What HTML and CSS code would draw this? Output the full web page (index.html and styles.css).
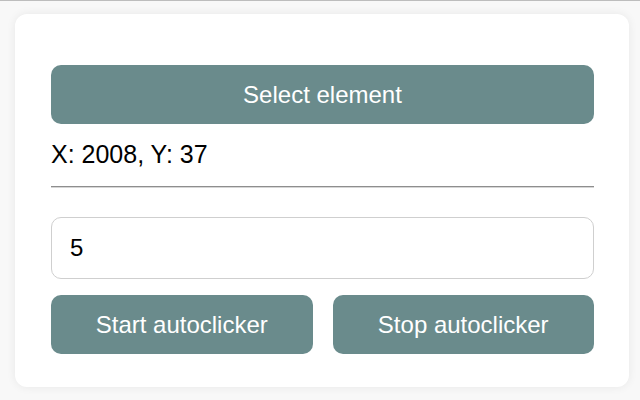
FILE: index.html
```html
<!DOCTYPE html>
<html>
<head>
<meta charset="utf-8">
<link rel="stylesheet" href="styles.css">
</head>
<body>
<div class="card">
  <button class="btn btn-select">Select element</button>
  <div class="coords">X: 2008, Y: 37</div>
  <hr class="divider">
  <input class="interval" type="text" value="5">
  <div class="actions">
    <button class="btn">Start autoclicker</button>
    <button class="btn">Stop autoclicker</button>
  </div>
</div>
</body>
</html>
```
FILE: styles.css
```css
html, body {
  margin: 0;
  height: 400px;
}
body {
  box-sizing: border-box;
  border-top: 1px solid #bdbdbd;
  background: #f8f8f8;
  padding: 13px 11px 13px 15px;
  font-family: "Liberation Sans", Arial, sans-serif;
  overflow: hidden;
}
.card {
  box-sizing: border-box;
  height: 373px;
  background: #ffffff;
  border-radius: 12px;
  box-shadow: 0 0 10px rgba(0, 0, 0, 0.07);
  padding: 51px 35px 33px 36px;
  display: flex;
  flex-direction: column;
}
.btn {
  height: 59px;
  border: none;
  border-radius: 10px;
  background: #6a8b8c;
  color: #ffffff;
  font-family: "Liberation Sans", Arial, sans-serif;
  font-size: 24px;
  padding: 0;
}
.btn-select {
  width: 100%;
}
.coords {
  margin-top: 16px;
  font-size: 25px;
  line-height: 28px;
  color: #000;
}
.divider {
  margin: 18px 0 0 0;
  border: none;
  border-top: 1px solid #8e8e8e;
  border-bottom: 1px solid #d6d6d6;
  height: 0;
}
.interval {
  box-sizing: border-box;
  margin-top: 29px;
  height: 62px;
  width: 100%;
  border: 1px solid #cfcfcf;
  border-radius: 10px;
  padding: 0 18px;
  font-family: "Liberation Sans", Arial, sans-serif;
  font-size: 24px;
  color: #000;
  outline: none;
}
.actions {
  margin-top: 16px;
  display: grid;
  grid-template-columns: 1fr 1fr;
  gap: 20px;
}
```
